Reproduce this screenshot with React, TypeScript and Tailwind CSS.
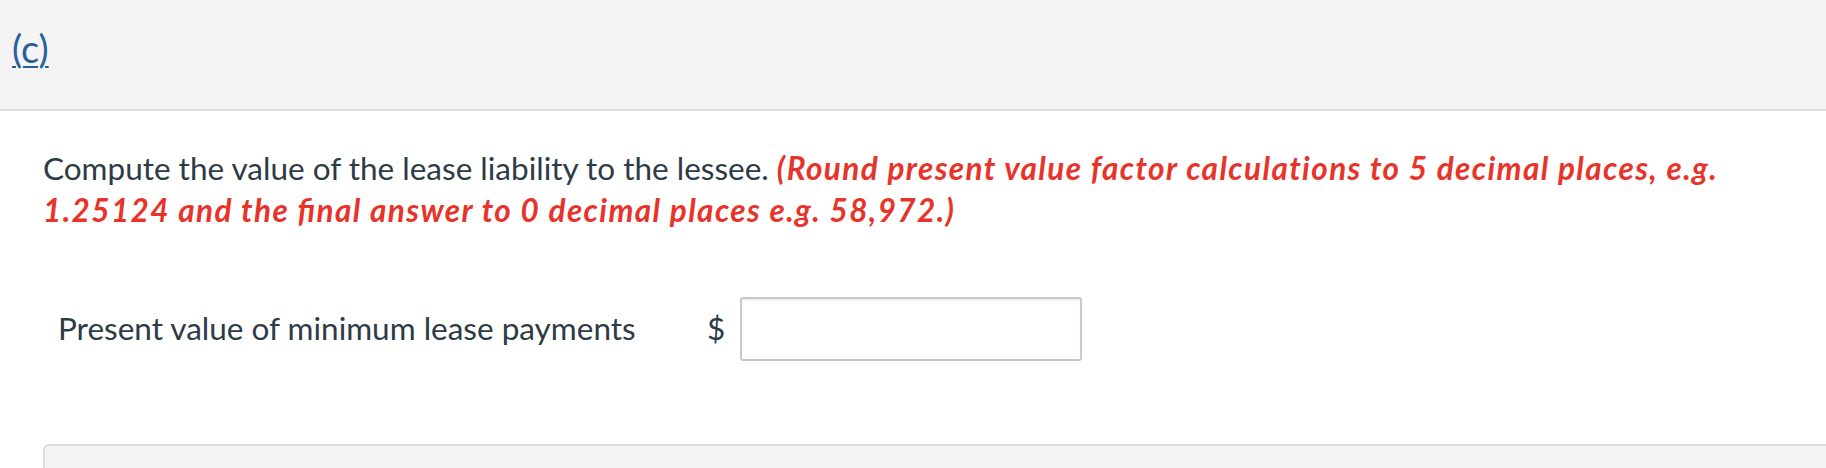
export default function App() {
  return (
    <div className="w-[1826px] h-[468px] overflow-hidden bg-white font-['Lato',sans-serif] text-[#2d3b45]">
      <div className="h-[111px] bg-[#f4f4f4] border-b-2 border-[#dddddd] pl-[12px] pt-[24px]">
        <a className="text-[38px] leading-[48px] text-[#2b5f9b] underline underline-offset-[3px] decoration-[2px]">(c)</a>
      </div>

      <div className="px-[43px] pt-[36px]">
        <p className="text-[31.5px] leading-[42px]">
          Compute the value of the lease liability to the lessee.{' '}
          <span className="font-bold italic tracking-[1.4px] text-[#e8332a]">
            (Round present value factor calculations to 5 decimal places, e.g. 1.25124 and the ﬁnal answer to 0 decimal
            places e.g. 58,972.)
          </span>
        </p>

        <div className="flex items-center mt-[66px] pl-[15px]">
          <span className="text-[31.5px] w-[649px]">Present value of minimum lease payments</span>
          <span className="text-[31.5px] w-[33px]">$</span>
          <input
            type="text"
            className="w-[342px] h-[64px] border-2 border-[#c8c8c8] rounded-[3px] shadow-[inset_0_2px_2px_rgba(0,0,0,0.06)] outline-none"
          />
        </div>

        <div className="mt-[83px] h-[40px] mr-[-43px] bg-[#f4f4f4] border-t-2 border-l-2 border-[#dddddd] rounded-tl-[6px]" />
      </div>
    </div>
  );
}
